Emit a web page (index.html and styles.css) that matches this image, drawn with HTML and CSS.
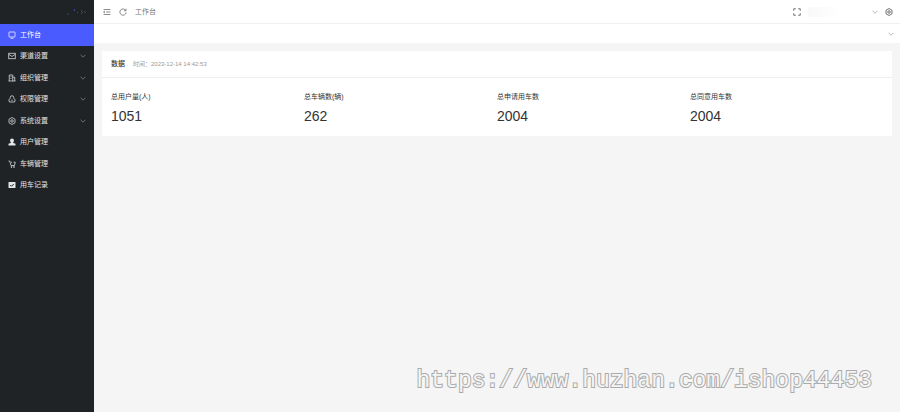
FILE: index.html
```
<!DOCTYPE html>
<html lang="zh-CN">
<head>
    <meta charset="UTF-8">
    <title>工作台</title>
    <link rel="stylesheet" href="styles.css">
</head>
<body>
    <div class="layout">
        <aside class="sidebar">
            <div class="logo">
                <svg class="logo-mark" viewBox="0 0 20 8">
                    <path d="M0 6h2M7 2v1M10 4l1 1M14 6l2-2M17 3l2 2" stroke="#45494d"/>
                    <path d="M7 2h1M14 3h1" stroke="#4a5cff"/>
                </svg>
            </div>
            <nav class="menu">
                <a href="#" class="menu-item active">
                    <svg class="icon" viewBox="0 0 16 16"><rect x="2" y="2" width="12" height="10" rx="1"/><path d="M5 14.5h6"/></svg>
                    <span>工作台</span>
                </a>
                <a href="#" class="menu-item">
                    <svg class="icon" viewBox="0 0 16 16"><rect x="1.5" y="2.5" width="13" height="11"/><path d="M2 5l6 4 6-4"/></svg>
                    <span>渠道设置</span>
                    <svg class="arrow" viewBox="0 0 10 10"><path d="M1 3l4 4 4-4"/></svg>
                </a>
                <a href="#" class="menu-item">
                    <svg class="icon" viewBox="0 0 16 16"><path d="M2.5 14V2h7v12M9.5 6.5h4V14M1 14h14M5 5.5h2M5 9h2"/></svg>
                    <span>组织管理</span>
                    <svg class="arrow" viewBox="0 0 10 10"><path d="M1 3l4 4 4-4"/></svg>
                </a>
                <a href="#" class="menu-item">
                    <svg class="icon" viewBox="0 0 16 16"><path d="M4.5 7V5a3.5 3.5 0 0 1 7 0v2l3 2.5-1.500 4.500H3L1.500 9.500zM8 9v3"/></svg>
                    <span>权限管理</span>
                    <svg class="arrow" viewBox="0 0 10 10"><path d="M1 3l4 4 4-4"/></svg>
                </a>
                <a href="#" class="menu-item">
                    <svg class="icon" viewBox="0 0 16 16"><path d="M8 1l6 3.5v7L8 15l-6-3.500v-7z"/><circle cx="8" cy="8" r="2.5"/></svg>
                    <span>系统设置</span>
                    <svg class="arrow" viewBox="0 0 10 10"><path d="M1 3l4 4 4-4"/></svg>
                </a>
                <a href="#" class="menu-item">
                    <svg class="icon solid" viewBox="0 0 16 16"><circle cx="8" cy="5" r="4"/><path d="M6 8h4l1 2 4 1.500V15H1v-3.500L5 10z"/></svg>
                    <span>用户管理</span>
                </a>
                <a href="#" class="menu-item">
                    <svg class="icon" viewBox="0 0 16 16"><path d="M1 2h2.500L6 11h7l1.500-6.500H11M6 4.500h2"/><circle cx="7" cy="14" r="1"/><circle cx="12" cy="14" r="1"/></svg>
                    <span>车辆管理</span>
                </a>
                <a href="#" class="menu-item">
                    <svg class="icon solid" viewBox="0 0 16 16"><rect x="1" y="2" width="14" height="12" rx="1"/><path class="tick" d="M4.5 8l2.500 2.500L11.500 6"/></svg>
                    <span>用车记录</span>
                </a>
            </nav>
        </aside>

        <div class="main">
            <header class="topbar">
                <button class="icon-btn" type="button" aria-label="收起菜单">
                    <svg class="icon" viewBox="0 0 16 16"><path d="M1 3h14M6 8h9M1 13h14M4 6L1 8l3 2"/></svg>
                </button>
                <button class="icon-btn" type="button" aria-label="刷新">
                    <svg class="icon" viewBox="0 0 16 16"><path d="M13.5 5A6.300 6.300 0 1 0 14.300 9M14 1.500V5.500h-4"/></svg>
                </button>
                <span class="crumb">工作台</span>
                <div class="topbar-right">
                    <button class="icon-btn" type="button" aria-label="全屏">
                        <svg class="icon dark" viewBox="0 0 16 16"><path d="M1.500 5.500v-4h4M10.500 1.500h4v4M14.500 10.500v4h-4M5.500 14.500h-4v-4"/></svg>
                    </button>
                    <span class="user"></span>
                    <button class="icon-btn" type="button" aria-label="用户菜单">
                        <svg class="arrow" viewBox="0 0 10 10"><path d="M1 3l4 4 4-4"/></svg>
                    </button>
                    <button class="icon-btn" type="button" aria-label="设置">
                        <svg class="icon dark" viewBox="0 0 16 16"><path d="M8 1l6 3.500v7L8 15l-6-3.500v-7z"/><circle cx="8" cy="8" r="2.500"/></svg>
                    </button>
                </div>
            </header>
            <div class="tabs">
                <button class="icon-btn" type="button" aria-label="标签操作">
                    <svg class="arrow" viewBox="0 0 10 10"><path d="M1 3l4 4 4-4"/></svg>
                </button>
            </div>

            <main class="content">
                <section class="card">
                    <div class="card-header">
                        <h2 class="card-title">数据</h2>
                        <span class="card-time">时间：2023-12-14 14:42:53</span>
                    </div>
                    <div class="stats">
                        <div class="stat">
                            <p class="stat-label">总用户量(人)</p>
                            <p class="stat-value">1051</p>
                        </div>
                        <div class="stat">
                            <p class="stat-label">总车辆数(辆)</p>
                            <p class="stat-value">262</p>
                        </div>
                        <div class="stat">
                            <p class="stat-label">总申请用车数</p>
                            <p class="stat-value">2004</p>
                        </div>
                        <div class="stat">
                            <p class="stat-label">总同意用车数</p>
                            <p class="stat-value">2004</p>
                        </div>
                    </div>
                </section>
            </main>
        </div>
    </div>
    <div class="watermark">https://www.huzhan.com/ishop44453</div>
</body>
</html>
```

FILE: styles.css
```
* {
    margin: 0;
    padding: 0;
    box-sizing: border-box;
}

body {
    background: #f5f5f5;
    color: #333;
    font-family: "Liberation Sans", "Noto Sans CJK SC", sans-serif;
    font-size: 7px;
    line-height: 10px;
}

.layout {
    display: flex;
    min-height: 100vh;
}

/* sidebar */
.sidebar {
    flex: 0 0 94px;
    background: #1f2326;
}

.logo {
    display: flex;
    align-items: center;
    justify-content: flex-end;
    height: 24px;
    padding-right: 7px;
}

.logo-mark {
    width: 20px;
    height: 8px;
}

.menu {
    display: grid;
    grid-auto-rows: 1fr;
    height: 172px;
}

.menu-item {
    display: flex;
    align-items: center;
    gap: 4px;
    padding: 0 8px;
    color: #e4e5e6;
    text-decoration: none;
}

.menu-item.active {
    background: #4a5cff;
    color: #fff;
}

.menu-item .arrow {
    margin-left: auto;
    stroke: #a0a3a5;
}

.icon {
    display: block;
    width: 8px;
    height: 8px;
    fill: none;
    stroke: currentColor;
    stroke-width: 1.5;
}

.icon.solid {
    fill: currentColor;
    stroke: none;
}

.icon.dark {
    color: #444;
}

.icon .tick {
    fill: none;
    stroke: #1f2326;
    stroke-width: 2;
}

.arrow {
    display: block;
    width: 6px;
    height: 6px;
    fill: none;
    stroke: #888;
    stroke-width: 1;
}

/* top bars */
.main {
    flex: 1;
    min-width: 0;
}

.topbar {
    display: flex;
    align-items: center;
    gap: 8px;
    height: 24px;
    padding: 0 7px 0 9px;
    background: #fff;
    border-bottom: 1px solid #f0f0f0;
}

.icon-btn {
    border: none;
    background: none;
    color: #666;
    cursor: pointer;
}

.crumb {
    color: #777;
}

.topbar-right {
    display: flex;
    align-items: center;
    gap: 7px;
    margin-left: auto;
}

.user {
    width: 57px;
    height: 10px;
    background: linear-gradient(to right, #f9f9f9, #fff 60%);
}

.tabs {
    display: flex;
    align-items: center;
    justify-content: flex-end;
    height: 19px;
    padding-right: 6px;
    background: #fff;
}

/* data card */
.content {
    padding: 8px;
}

.card {
    background: #fff;
    border-radius: 1px;
}

.card-header {
    display: flex;
    align-items: center;
    gap: 8px;
    height: 27px;
    padding: 0 9px;
    border-bottom: 1px solid #eee;
}

.card-title {
    font-size: 7px;
    font-weight: 500;
}

.card-time {
    color: #999;
    font-size: 6px;
}

.stats {
    display: grid;
    grid-template-columns: repeat(4, 1fr);
    padding: 14px 9px 11px;
}

.stat-value {
    margin-top: 5px;
    font-size: 14px;
    line-height: 18px;
}

/* outlined text: the fill covers the inner half of the stroke */
.watermark {
    position: absolute;
    right: 28px;
    bottom: 16px;
    color: #f5f5f5;
    font-family: "Liberation Mono", monospace;
    font-size: 23px;
    line-height: 30px;
    -webkit-text-stroke: 2px #aaa;
    paint-order: stroke fill;
}
```
